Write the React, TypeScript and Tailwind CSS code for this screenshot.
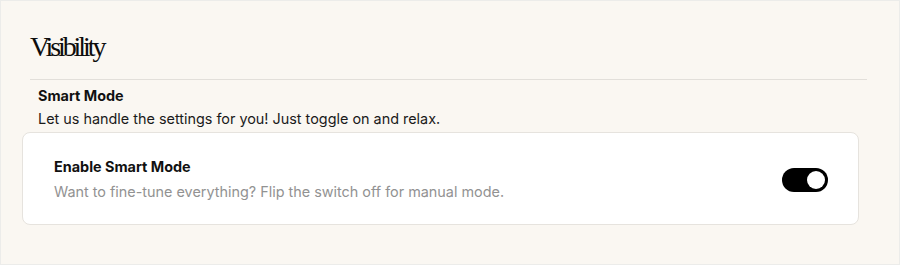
import React, { useState } from "react";

export default function App() {
  const [on, setOn] = useState(true);
  return (
    <div className="w-[900px] h-[265px] border border-[#ececea] bg-[#faf7f2] box-border overflow-hidden font-['Inter',sans-serif]">
      <div className="pl-[29px] pr-[32px] pt-[29px]">
        <h2 className="font-['Liberation_Serif',serif] text-[28px] leading-[34px] tracking-[-0.11em] text-[#0d0d0d]">
          Visibility
        </h2>
        <div className="mt-[15px] border-t border-[#e2dfda]" />
        <div className="pl-[8px] pt-[6px]">
          <div className="text-[14.4px] leading-[20px] font-bold text-[#111]">Smart Mode</div>
          <div className="mt-[3px] text-[14.4px] leading-[20px] text-[#1a1a1a]">
            Let us handle the settings for you! Just toggle on and relax.
          </div>
        </div>
        <div className="-ml-2 mr-2 mt-[3px] flex items-center justify-between rounded-[8px] border border-[#e6e3de] bg-white pl-[31px] pr-[30px] pt-6 pb-[22px]">
          <div>
            <div className="text-[14.4px] leading-[20px] font-bold text-[#111]">Enable Smart Mode</div>
            <div className="mt-[5px] text-[14.4px] leading-[20px] text-[#929292]">
              Want to fine-tune everything? Flip the switch off for manual mode.
            </div>
          </div>
          <button
            type="button"
            onClick={() => setOn(!on)}
            className={`relative flex h-[24px] w-[46px] items-center rounded-full px-[3px] ${on ? "bg-black justify-end" : "bg-gray-300 justify-start"}`}
          >
            <span className="block h-[18px] w-[18px] rounded-full bg-white" />
          </button>
        </div>
      </div>
    </div>
  );
}
